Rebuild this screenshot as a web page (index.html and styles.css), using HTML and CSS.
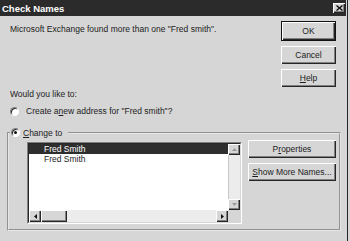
FILE: index.html
```html
<!DOCTYPE html>
<html lang="en">
<head>
    <meta charset="UTF-8">
    <title>Check Names</title>
    <link rel="stylesheet" href="styles.css">
</head>
<body>
    <div class="window">
        <div class="titlebar">
            <span class="title">Check Names</span>
            <span class="close">
                <svg width="7" height="6" viewBox="0 0 7 6"><path d="M0.5 0.5 L6.5 5.5 M6.5 0.5 L0.5 5.5" stroke="#111" stroke-width="1.4"/></svg>
            </span>
        </div>

        <div class="content">
            <div class="top">
                <p class="msg">Microsoft Exchange found more than one "Fred smith".</p>
                <div class="btncol">
                    <button class="btn default">OK</button>
                    <button class="btn">Cancel</button>
                    <button class="btn"><u>H</u>elp</button>
                </div>
            </div>

            <p class="question">Would you like to:</p>
            <label class="option first"><span class="radio"></span>Create a <u>n</u>ew address for "Fred smith"?</label>

            <fieldset class="group">
                <legend class="option"><span class="radio checked"></span><u>C</u>hange to</legend>

                <div class="listbox">
                    <div class="lb-inner">
                        <div class="items">
                            <div class="row selected">Fred Smith</div>
                            <div class="row">Fred Smith</div>
                        </div>
                        <div class="vscroll">
                            <span class="sbtn"><svg width="5" height="3" viewBox="0 0 5 3"><polygon points="2.5,0 5,3 0,3" fill="#9a9a9a"/></svg></span>
                            <span class="track"></span>
                            <span class="sbtn"><svg width="5" height="3" viewBox="0 0 5 3"><polygon points="0,0 5,0 2.5,3" fill="#9a9a9a"/></svg></span>
                        </div>
                        <div class="hscroll">
                            <span class="sbtn"><svg width="3" height="5" viewBox="0 0 3 5"><polygon points="3,0 3,5 0,2.5" fill="#111"/></svg></span>
                            <span class="thumb"></span>
                            <span class="track"></span>
                            <span class="sbtn"><svg width="3" height="5" viewBox="0 0 3 5"><polygon points="0,0 3,2.5 0,5" fill="#111"/></svg></span>
                        </div>
                        <div class="corner"></div>
                    </div>
                </div>

                <div class="btncol wide">
                    <button class="btn">P<u>r</u>operties</button>
                    <button class="btn"><u>S</u>how More Names...</button>
                </div>
            </fieldset>
        </div>
    </div>
</body>
</html>
```

FILE: styles.css
```css
* {
    box-sizing: border-box;
}
body {
    margin: 0;
    background-color: #d6d6d6;
    font-family: "Liberation Sans", Arial, sans-serif;
    font-size: 8.5px;
    color: #1c1c1c;
}
p {
    margin: 0;
}
.window {
    width: 348px;
    height: 241px;
    border-right: 1px solid #262626;
}
.titlebar {
    height: 16px;
    margin-right: 1px;
    padding: 0 1px 0 2px;
    background-color: #2b2b2b;
    display: flex;
    align-items: center;
    justify-content: space-between;
}
.title {
    color: #fff;
    font-weight: bold;
    font-size: 9.5px;
}
.close {
    width: 12px;
    height: 10px;
    background-color: #d6d6d6;
    box-shadow: inset 1px 1px 0 #fff, inset -1px -1px 0 #262626, inset -2px -2px 0 #808080;
    display: flex;
    align-items: center;
    justify-content: center;
    padding-bottom: 1px;
}
.content {
    padding: 5px 6px 0 7px;
}
.top {
    display: flex;
    justify-content: space-between;
    padding: 0 5px 0 3px;
}
.msg {
    margin-top: 3px;
    line-height: 11px;
}
.btncol {
    width: 55px;
    display: flex;
    flex-direction: column;
    gap: 5px;
}
.btncol.wide {
    width: 88px;
    margin-left: 6px;
}
.btn {
    height: 18px;
    padding: 0;
    border: none;
    background-color: #d6d6d6;
    font: inherit;
    color: #1c1c1c;
    box-shadow: inset 1px 1px 0 #fff, inset -1px -1px 0 #262626, inset -2px -2px 0 #808080;
}
.btn.default {
    height: 20px;
    border: 1px solid #111;
}
.question {
    margin-top: 2px;
    padding-left: 3px;
    line-height: 11px;
}
.option {
    display: flex;
    align-items: center;
    height: 12px;
}
.option.first {
    margin-top: 5px;
    padding-left: 3px;
}
.option.first .radio {
    margin-right: 7px;
}
.radio {
    width: 9px;
    height: 9px;
    border-radius: 50%;
    background-color: #fff;
    border: 1px solid;
    border-color: #808080 #fff #fff #808080;
    box-shadow: inset 1px 1px 0 #2a2a2a;
    margin-right: 3px;
    display: flex;
    align-items: center;
    justify-content: center;
}
.radio.checked::after {
    content: "";
    width: 3px;
    height: 3px;
    border-radius: 50%;
    background-color: #111;
}
.group {
    margin: 10px 0 0 0;
    padding: 2px 3px 5px 18px;
    border: 2px groove #e6e6e6;
    display: flex;
    align-items: flex-start;
}
.group legend {
    height: 11px;
    margin-left: -17px;
    padding: 0 6px 0 1px;
}
.listbox {
    width: 215px;
    height: 82px;
    margin-top: 2px;
    border: 1px solid;
    border-color: #808080 #fff #fff #808080;
}
.lb-inner {
    height: 100%;
    border: 1px solid;
    border-color: #262626 #d6d6d6 #d6d6d6 #262626;
    display: grid;
    grid-template-columns: 1fr 12px;
    grid-template-rows: 1fr 12px;
}
.items {
    background-color: #fff;
}
.row {
    height: 10px;
    line-height: 10px;
    padding-left: 15px;
}
.row.selected {
    background-color: #2e2e2e;
    color: #fff;
}
.vscroll {
    display: flex;
    flex-direction: column;
}
.hscroll {
    display: flex;
}
.track {
    flex: 1;
    background-color: #ececec;
}
.vscroll .track {
    border-left: 1px solid #c8c8c8;
}
.sbtn, .thumb {
    background-color: #d6d6d6;
    box-shadow: inset 1px 1px 0 #fff, inset -1px -1px 0 #262626, inset -2px -2px 0 #808080;
    display: flex;
    align-items: center;
    justify-content: center;
}
.vscroll .sbtn {
    height: 11px;
}
.hscroll .sbtn {
    width: 12px;
}
.thumb {
    width: 26px;
}
.corner {
    background-color: #d6d6d6;
}
```
